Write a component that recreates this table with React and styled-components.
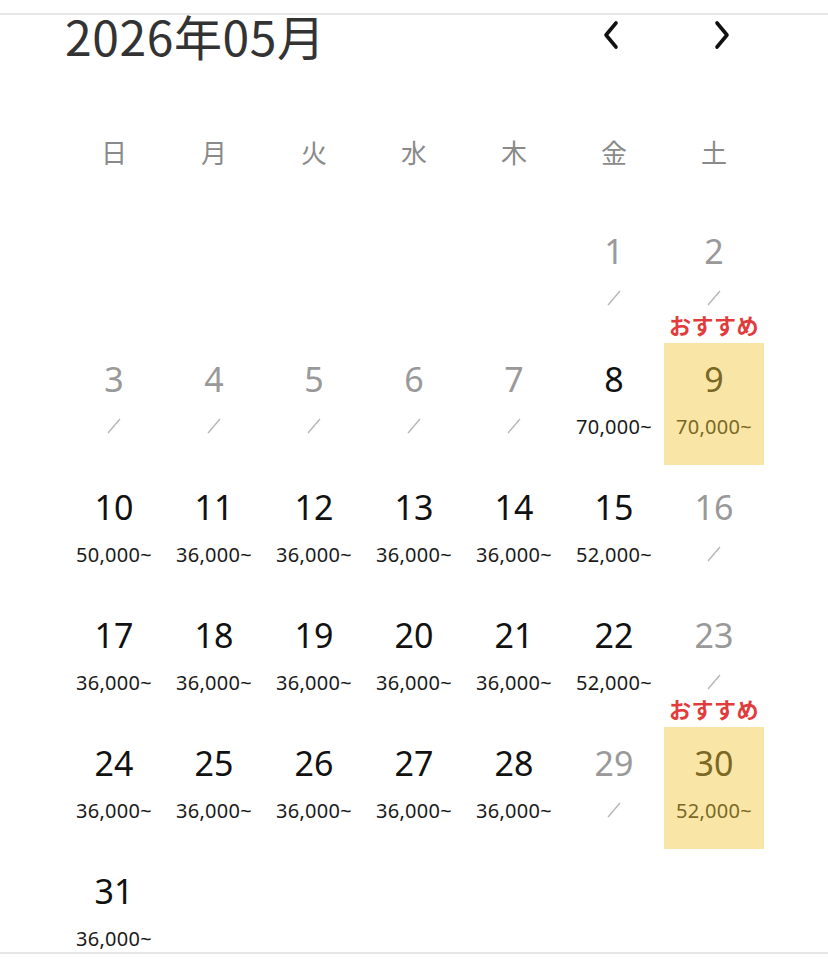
import styled, { createGlobalStyle } from 'styled-components'

const GlobalStyle = createGlobalStyle`
  body {
    margin: 0;
    background: #fff;
    font-family: "Noto Sans", "Noto Sans CJK JP", sans-serif;
  }
`;

const Page = styled.div`
  width: 828px;
  padding-top: 13px;
`;

const Calendar = styled.div`
  border-top: 2px solid #e6e6e6;
  border-bottom: 2px solid #e6e6e6;
  padding: 0 64px;
`;

const Header = styled.header`
  display: flex;
  justify-content: space-between;
  align-items: flex-start;
  height: 40px;
`;

const Title = styled.h1`
  margin: 0 0 0 1px;
  font-family: "Noto Sans CJK JP", sans-serif;
  font-weight: 400;
  font-size: 48px;
  line-height: 36px;
  padding-top: 2px;
  color: #333;
  letter-spacing: 0.6px;
`;

const Nav = styled.div`
  display: flex;
  gap: 71px;
  margin-right: 22px;
`;

const NavButton = styled.button`
  width: 40px;
  height: 40px;
  padding: 0;
  border: none;
  background: none;
  display: flex;
  align-items: center;
  justify-content: center;
`;

const Weekdays = styled.div`
  display: grid;
  grid-template-columns: repeat(7, 100px);
  margin-top: 81px;
`;

const Weekday = styled.div`
  text-align: center;
  font-family: "Noto Sans CJK JP", sans-serif;
  font-size: 26px;
  line-height: 32px;
  color: #8a8a8a;
`;

const Week = styled.div`
  display: grid;
  grid-template-columns: repeat(7, 100px);
  height: ${(p) => (p.$last ? '97px' : '122px')};
  margin-top: ${(p) => (p.$first ? '47px' : '6px')};
`;

const Cell = styled.div`
  position: relative;
  display: flex;
  flex-direction: column;
  align-items: center;
  padding-top: 18px;
  background: ${(p) => (p.$pick ? '#f9e6a6' : 'transparent')};
`;

const DayNum = styled.div`
  font-size: 34px;
  line-height: 36px;
  color: ${(p) => (p.$pick ? '#7a6824' : p.$off ? '#999' : '#111')};
`;

const Price = styled.div`
  margin-top: 17px;
  height: 24px;
  display: flex;
  align-items: center;
  font-size: 20px;
  letter-spacing: 0.3px;
  color: ${(p) => (p.$pick ? '#7a6824' : '#1a1a1a')};
`;

const Badge = styled.div`
  position: absolute;
  left: 0;
  right: 0;
  bottom: calc(100% + 6px);
  text-align: center;
  font-family: "Noto Sans CJK JP", sans-serif;
  font-weight: 700;
  font-size: 22px;
  line-height: 26px;
  color: #e23b3b;
  letter-spacing: 0.5px;
`;

const Chevron = ({ dir }) => (
  <svg width="20" height="30" viewBox="0 0 20 30">
    <path
      d={dir === 'left' ? 'M15 3 L5 15 L15 27' : 'M5 3 L15 15 L5 27'}
      fill="none"
      stroke="#111"
      strokeWidth="3.6"
      strokeLinecap="round"
      strokeLinejoin="round"
    />
  </svg>
);

const Slash = () => (
  <svg width="14" height="16" viewBox="0 0 14 16">
    <line x1="1" y1="15" x2="13" y2="1" stroke="#b5b5b5" strokeWidth="1.3" />
  </svg>
);

const prices = {
  8: '70,000~', 9: '70,000~', 10: '50,000~', 11: '36,000~', 12: '36,000~',
  13: '36,000~', 14: '36,000~', 15: '52,000~', 17: '36,000~', 18: '36,000~',
  19: '36,000~', 20: '36,000~', 21: '36,000~', 22: '52,000~', 24: '36,000~',
  25: '36,000~', 26: '36,000~', 27: '36,000~', 28: '36,000~', 30: '52,000~',
  31: '36,000~',
};
const picks = [9, 30];

const buildWeeks = () => {
  const cells = [null, null, null, null, null];
  for (let d = 1; d <= 31; d++) cells.push(d);
  const weeks = [];
  for (let i = 0; i < cells.length; i += 7) weeks.push(cells.slice(i, i + 7));
  return weeks;
};

export default function App() {
  const weeks = buildWeeks();
  const weekdays = ['日', '月', '火', '水', '木', '金', '土'];

  return (
    <Page>
      <GlobalStyle />
      <Calendar>
        <Header>
          <Title>2026年05月</Title>
          <Nav>
            <NavButton><Chevron dir="left" /></NavButton>
            <NavButton><Chevron dir="right" /></NavButton>
          </Nav>
        </Header>
        <Weekdays>
          {weekdays.map((w) => <Weekday key={w}>{w}</Weekday>)}
        </Weekdays>
        {weeks.map((week, wi) => (
          <Week key={wi} $first={wi === 0} $last={wi === weeks.length - 1}>
            {week.map((d, i) => {
              if (!d) return <Cell key={i} />;
              const price = prices[d];
              const pick = picks.includes(d);
              return (
                <Cell key={i} $pick={pick}>
                  {pick && <Badge>おすすめ</Badge>}
                  <DayNum $off={!price} $pick={pick}>{d}</DayNum>
                  <Price $pick={pick}>{price || <Slash />}</Price>
                </Cell>
              );
            })}
          </Week>
        ))}
      </Calendar>
    </Page>
  );
}
